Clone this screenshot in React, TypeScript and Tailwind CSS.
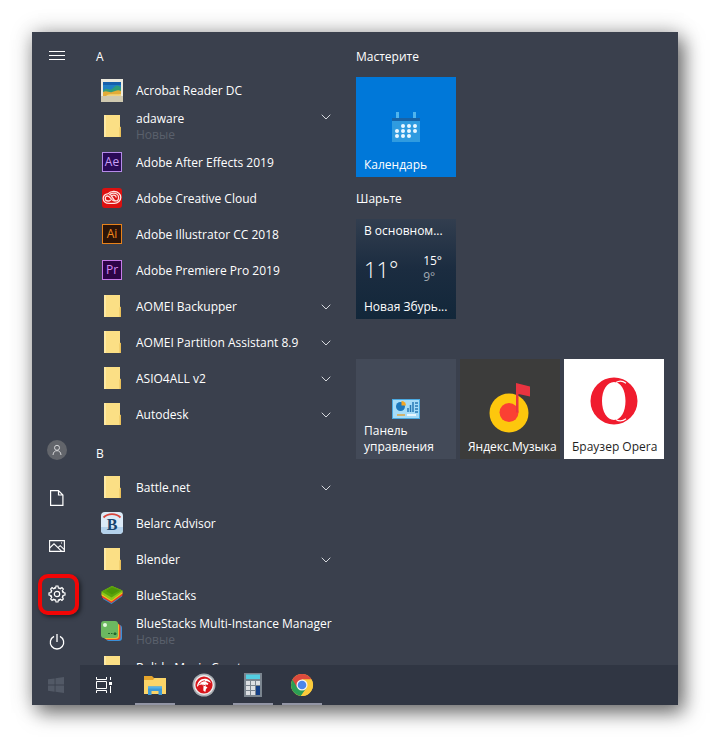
import type { ReactNode } from 'react';
import { ChevronDown } from 'lucide-react';
import clsx from 'clsx';

interface AppEntry {
  name: string;
  icon?: ReactNode;
  isNew?: boolean;
  folder?: boolean;
}

interface AppGroup {
  letter: string;
  apps: AppEntry[];
}

/* ---------- App icons ---------- */

function FolderIcon() {
  return (
    <svg viewBox="0 0 24 24" className="h-6 w-6" aria-hidden="true">
      <path d="M4 1h16v12l1 1.500v8.500H4z" fill="#fbdf85" />
      <path d="M4 1h2v22H4z" fill="#fde9a4" />
      <path d="M19.500 13.500l1.500-1v10.500h-1.500z" fill="#e9bf58" />
    </svg>
  );
}

function PictureIcon() {
  return (
    <svg viewBox="0 0 24 24" className="h-6 w-6" aria-hidden="true">
      <path d="M1 1h22v23H1z" fill="#eceade" />
      <path d="M1 18h22v6H1z" fill="#cfc9b0" />
      <path d="M3 4h18v14H3z" fill="#1f7fc4" />
      <path d="M3 4h18v3H3z" fill="#1560ac" />
      <path d="M3 13c4-5 6 0 9-2s5-6 9-1v4H3z" fill="#2f9d78" />
      <path d="M3 14c4-2 6 1 9 0s6-3 9-1v5H3z" fill="#e2ac37" />
      <path d="M6 18c3-3 8-1 15-2v2z" fill="#f1d27c" />
    </svg>
  );
}

function AfterEffectsIcon() {
  return (
    <span className="flex h-5 w-5 items-center justify-center border border-[#b58be8] bg-[#2a0a57] text-xs leading-none font-medium text-[#c9a0f5]">
      Ae
    </span>
  );
}

function IllustratorIcon() {
  return (
    <span className="flex h-5 w-5 items-center justify-center border border-[#e8821a] bg-[#2b1408] text-xs leading-none font-medium text-[#f58a1f]">
      Ai
    </span>
  );
}

function PremiereIcon() {
  return (
    <span className="flex h-5 w-5 items-center justify-center border border-[#c77be8] bg-[#2d0447] text-xs leading-none font-medium text-[#d58cf5]">
      Pr
    </span>
  );
}

function CreativeCloudIcon() {
  return (
    <svg viewBox="0 0 20 20" className="h-5 w-5" fill="none" aria-hidden="true">
      <rect width="20" height="20" rx="3" fill="#dc1010" />
      <g stroke="#ffe4e0" strokeWidth="1.300">
        <path d="M7 15.300c-3.500 0-5.800-2-5.800-4.800S3.500 6 6.200 5.600C8 3.500 10.200 3.200 12 3.300c4 .2 6.800 2.800 6.800 6s-2.800 6-6.500 6z" />
        <path d="M13.500 12.800H12c-2.500 0-4-4.800-6.500-4.800C4.300 8 3.300 9 3.300 10.400s1.200 2.600 2.900 2.600c1.300 0 1.800-.5 2.600-1.200" />
        <path d="M7.200 7.200c1-1.300 2.500-2 4.200-2 3 0 5.200 1.800 5.200 4.200 0 2-1.400 3.500-3 3.500-2.300 0-3-4.500-5-5.800" />
        <path d="M10 7.500c2-.8 4 0 4.200 2" />
      </g>
    </svg>
  );
}

function BelarcIcon() {
  return (
    <svg viewBox="0 0 24 24" className="h-6 w-6" aria-hidden="true">
      <rect x="1" y="1" width="22" height="22" rx="4" fill="#dbeaf7" />
      <path d="M1 16h22v3a4 4 0 0 1-4 4H5a4 4 0 0 1-4-4z" fill="#b4d2ec" />
      <path d="M3.500 6.500C8 2 16 2 20.500 6.500" fill="none" stroke="#d8453c" strokeWidth="1.800" />
      <text
        x="12"
        y="19"
        textAnchor="middle"
        fontSize="16"
        fontWeight="700"
        fill="#17446f"
        className="font-['Liberation_Serif',serif]"
      >
        B
      </text>
    </svg>
  );
}

function BlueStacksIcon() {
  return (
    <svg viewBox="0 0 24 24" className="h-6 w-6" aria-hidden="true">
      <path d="M3 14l8.500 5.500L22 11v2.500L11.500 21 3 16z" fill="#2e8fd6" />
      <path d="M2 12.500l9.500 5.500L22.500 9.500v3L11.500 20 2 14.500z" fill="#e83a25" />
      <path d="M1.500 10.500l10 6L22.500 8.500v2l-11 8-10-6z" fill="#f8c51c" />
      <path d="M1.500 8.500L12 3l10.500 4.500v1.500l-11 8.500-10-6.500z" fill="#8cc81a" />
      <path d="M1.500 8.500L12 3l10.500 4.500-11 7z" fill="#5ba30b" />
      <path d="M6 8L12 4.500l7.500 3-7.500 4z" fill="#4c9408" />
    </svg>
  );
}

function MultiInstanceIcon() {
  return (
    <svg viewBox="0 0 24 24" className="h-6 w-6" aria-hidden="true">
      <rect x="6" y="6" width="16" height="16" rx="3" fill="#3b8fd8" />
      <rect x="5" y="5" width="15.500" height="16" rx="3" fill="#e9492b" />
      <rect x="3.500" y="4" width="15.500" height="16" rx="3" fill="#f5bd2f" />
      <rect x="1" y="2" width="17" height="17" rx="3" fill="#6cb860" />
      <circle cx="5" cy="6" r="2" fill="#e4f7dd" />
      <path d="M8 14.500h2M11 14.500h1.500M14 14h2v1.500h-2z" stroke="#22692d" fill="#22692d" />
    </svg>
  );
}

/* ---------- Rail icons ---------- */

const stroke = {
  fill: 'none',
  stroke: 'currentColor',
  'aria-hidden': true,
} as const;

function MenuIcon() {
  return (
    <svg viewBox="0 0 16 16" className="h-4 w-4" {...stroke}>
      <path d="M0 3.500h16M0 7.500h16M0 11.500h16" />
    </svg>
  );
}

function UserIcon() {
  return (
    <svg viewBox="0 0 20 20" className="h-5 w-5" {...stroke}>
      <circle cx="10" cy="10" r="10" fill="#62656b" stroke="none" />
      <circle cx="10" cy="7.800" r="2.500" stroke="#d5d6d8" />
      <path d="M6 15c.3-3 1.800-4.300 4-4.300s3.700 1.300 4 4.300" stroke="#d5d6d8" />
    </svg>
  );
}

function DocumentIcon() {
  return (
    <svg viewBox="0 0 16 16" className="h-4 w-4" {...stroke} strokeWidth="1.200">
      <path d="M1.600.6h7.900l4.400 4.400v10.400H1.600zM9.500.6V5h4.400" />
    </svg>
  );
}

function PhotosIcon() {
  return (
    <svg viewBox="0 0 16 16" className="h-4 w-4" {...stroke} strokeWidth="1.100">
      <path d="M.6 2.600h14.800v10.800H.6z" />
      <path d="M.6 10L5 5.800l7.500 7.400M9 9.700l2.200-2 4.200 4" />
      <path d="M12 5h1" />
    </svg>
  );
}

function SettingsIcon() {
  const teeth = [0, 45, 90, 135, 180, 225, 270, 315];
  return (
    <svg viewBox="0 0 18 18" className="h-[18px] w-[18px]" {...stroke} strokeWidth="1.200">
      <circle cx="9" cy="9" r="2.700" />
      {teeth.map((angle) => (
        <path
          key={angle}
          d="M6.600 3.200L7.600 3l.4-2h2l.4 2 1 .4 1-.8"
          transform={`rotate(${angle} 9 9)`}
        />
      ))}
    </svg>
  );
}

function PowerIcon() {
  return (
    <svg viewBox="0 0 16 16" className="h-4 w-4" {...stroke} strokeWidth="1.300">
      <path d="M8 0v8M5 2.300a6.700 6.700 0 1 0 6 0" />
    </svg>
  );
}

/* ---------- Taskbar icons ---------- */

function WindowsIcon() {
  return (
    <svg viewBox="0 0 16 16" className="h-4 w-4" fill="#525966" aria-hidden="true">
      <path d="M0 2.300L6.600 1.400v6.200H0zM7.500 1.300L16 0v7.600H7.500zM0 8.500h6.600v6.200L0 13.800zM7.500 8.500H16V16l-8.500-1.200z" />
    </svg>
  );
}

function TaskViewIcon() {
  return (
    <svg viewBox="0 0 18 16" className="h-4 w-[18px]" {...stroke}>
      <path d="M1.500 0v2.500h10V0M1.500 4.500h10v7h-10zM1.500 16v-2.500h10V16M15.500 0v3M15.500 9v7" />
      <path d="M14 5h3v3h-3z" fill="currentColor" stroke="none" />
    </svg>
  );
}

function ExplorerIcon() {
  return (
    <svg viewBox="0 0 24 24" className="h-6 w-6" aria-hidden="true">
      <path d="M1 3h8l2 2h12v16H1z" fill="#e5a52c" />
      <path d="M1 7h9l1.500-2H23v16H1z" fill="#fbd568" />
      <path d="M5 13.500h14V22h-3.500v-4h-7v4H5z" fill="#3d9ad6" />
      <path d="M5 13.500h14v2H5z" fill="#55b2e8" />
    </svg>
  );
}

function SpartanIcon() {
  return (
    <svg viewBox="0 0 24 24" className="h-6 w-6" aria-hidden="true">
      <circle cx="12" cy="12" r="11.500" fill="#a9aeb3" />
      <circle cx="12" cy="12" r="10" fill="#eceeef" />
      <circle cx="12" cy="12" r="8.600" fill="#d8161c" />
      <path
        d="M5 14c0-6 5-9.500 10-8 2 .7 3.500 2 4 4-2-1.600-4-2.200-6-1.700l3.500 2.200-1 1.500-2-.7.5 2.200 1.500 1-1.500 1.500-.7 3-2-1.500.2-4.500-1.800-1.500c-2 0-3.500.8-4.700 2.500z"
        fill="#fff"
      />
      <path d="M7 11.500c1.500-2.500 3.500-3.500 6-3.700M10.500 12l3 .8" fill="none" stroke="#d8161c" strokeWidth=".9" />
    </svg>
  );
}

function CalculatorIcon() {
  return (
    <svg viewBox="0 0 24 24" className="h-6 w-6" aria-hidden="true">
      <path d="M3 0h18v24H3z" fill="#7b858f" />
      <path d="M5 1.500h14V6H5z" fill="#53cfe2" />
      <path d="M5 8h4v4H5zM10 8h4v4h-4zM15 8h4v4h-4zM5 13h4v4H5zM10 13h4v4h-4zM5 18h4v4H5zM10 18h4v4h-4z" fill="#dcdfe3" />
      <path d="M15 13h4v9h-4z" fill="#143f86" />
    </svg>
  );
}

function ChromeIcon() {
  return (
    <svg viewBox="0 0 24 24" className="h-6 w-6" aria-hidden="true">
      <circle cx="12" cy="12" r="11" fill="#fbcb3c" />
      <path d="M12 12L2.500 6.500a11 11 0 0 0 8.400 16.450L16.760 14.750z" fill="#2b9e55" />
      <path d="M12 6.500h9.530A11 11 0 0 0 2.470 6.500l4.770 8.250z" fill="#dc4a3d" />
      <path d="M21.530 6.500H12l4.760 8.250-5.860 8.200A11 11 0 0 0 21.530 6.500z" fill="#fbcb3c" />
      <circle cx="12" cy="12" r="5.500" fill="#f4f4f4" />
      <circle cx="12" cy="12" r="4.300" fill="#4a86ea" />
    </svg>
  );
}

/* ---------- Tile icons ---------- */

function CalendarIcon() {
  const dots = [
    [14, 15], [20, 15], [26, 15],
    [8, 20], [14, 20], [20, 20], [26, 20],
    [8, 25], [14, 25], [20, 25],
  ];
  return (
    <svg viewBox="0 0 34 34" className="h-[34px] w-[34px]" aria-hidden="true">
      <path d="M7 1h3v6H7zM24 1h3v6h-3z" fill="#4fb4ee" />
      <path d="M3 9h28v22H3z" fill="#2f9be0" />
      <path d="M3 7h28v3H3z" fill="#1763a8" />
      {dots.map(([x, y]) => (
        <circle key={`${x}-${y}`} cx={x} cy={y} r="2" fill="#eaf7ff" />
      ))}
    </svg>
  );
}

function ControlPanelIcon() {
  return (
    <svg viewBox="0 0 28 20" className="h-5 w-7" aria-hidden="true">
      <path d="M0 0h28v20H0z" fill="#4aa9e0" />
      <path d="M1 1h26v18H1z" fill="#a5dcf8" />
      <circle cx="8.500" cy="7.500" r="4.500" fill="#1d78bd" />
      <path d="M9.500 6.500V2a4.500 4.500 0 0 1 4.500 4.500z" fill="#f5a623" />
      <path d="M16 13V9M18.500 13V6M21 13V3" stroke="#2779b5" strokeWidth="1.500" />
      <path d="M23 4h3M23 7h3M23 10h3M23 13h3" stroke="#2779b5" strokeWidth="1.300" />
      <path d="M5 16h8" stroke="#e0a640" strokeWidth="1.500" />
      <path d="M15 16h9" stroke="#fff" strokeWidth="1.500" />
    </svg>
  );
}

function MusicIcon() {
  return (
    <svg viewBox="0 0 42 50" className="h-[50px] w-[42px]" aria-hidden="true">
      <circle cx="20" cy="30" r="19.500" fill="#fdc70d" />
      <circle cx="20" cy="29.500" r="9.500" fill="#fb4033" />
      <path d="M27 0l14 3.500v10L29.500 11v18.500H27z" fill="#e93440" />
    </svg>
  );
}

function OperaIcon() {
  return (
    <svg viewBox="0 0 48 48" className="h-12 w-12" aria-hidden="true">
      <path
        fillRule="evenodd"
        d="M24 .5a23.500 23.500 0 1 0 0 47 23.500 23.500 0 0 0 0-47zM24 5c7 0 11.500 8.500 11.500 19S31 43 24 43s-12-8.500-12-19S17 5 24 5z"
        fill="#f01c2e"
      />
      <path d="M26 5.500c3-2 7-1.500 10 .8" fill="none" stroke="#fff" strokeWidth="1.200" />
      <path d="M26 42.500c3 2 7 1.500 10-.8" fill="none" stroke="#fff" strokeWidth="1.200" />
    </svg>
  );
}

/* ---------- Data ---------- */

const APP_GROUPS: AppGroup[] = [
  {
    letter: 'A',
    apps: [
      { name: 'Acrobat Reader DC', icon: <PictureIcon /> },
      { name: 'adaware', folder: true, isNew: true },
      { name: 'Adobe After Effects 2019', icon: <AfterEffectsIcon /> },
      { name: 'Adobe Creative Cloud', icon: <CreativeCloudIcon /> },
      { name: 'Adobe Illustrator CC 2018', icon: <IllustratorIcon /> },
      { name: 'Adobe Premiere Pro 2019', icon: <PremiereIcon /> },
      { name: 'AOMEI Backupper', folder: true },
      { name: 'AOMEI Partition Assistant 8.9', folder: true },
      { name: 'ASIO4ALL v2', folder: true },
      { name: 'Autodesk', folder: true },
    ],
  },
  {
    letter: 'B',
    apps: [
      { name: 'Battle.net', folder: true },
      { name: 'Belarc Advisor', icon: <BelarcIcon /> },
      { name: 'Blender', folder: true },
      { name: 'BlueStacks', icon: <BlueStacksIcon /> },
      { name: 'BlueStacks Multi-Instance Manager', icon: <MultiInstanceIcon />, isNew: true },
      { name: 'Bolide Movie Creator', folder: true },
    ],
  },
];

const RAIL_ITEMS = [
  { label: 'Пользователь', icon: <UserIcon /> },
  { label: 'Документы', icon: <DocumentIcon /> },
  { label: 'Изображения', icon: <PhotosIcon /> },
  { label: 'Параметры', icon: <SettingsIcon />, highlighted: true },
  { label: 'Выключение', icon: <PowerIcon /> },
];

const TASKBAR_ITEMS = [
  { label: 'Проводник', icon: <ExplorerIcon />, running: true },
  { label: 'Антивирус', icon: <SpartanIcon />, running: false },
  { label: 'Калькулятор', icon: <CalculatorIcon />, running: true },
  { label: 'Google Chrome', icon: <ChromeIcon />, running: true },
];

/* ---------- Sections ---------- */

function Rail() {
  return (
    <nav className="flex w-12 shrink-0 flex-col justify-between pl-px">
      <button type="button" aria-label="Меню" className="flex h-12 items-center justify-center">
        <MenuIcon />
      </button>
      <div className="flex flex-col">
        {RAIL_ITEMS.map((item) => (
          <button
            key={item.label}
            type="button"
            aria-label={item.label}
            className="relative flex h-12 items-center justify-center pt-0.5"
          >
            {item.icon}
            {item.highlighted && (
              <span className="absolute top-[5px] right-px bottom-[2px] left-[5px] rounded-[10px] border-4 border-[#f20505] shadow-[2px_2px_4px_rgba(0,0,0,0.5)]" />
            )}
          </button>
        ))}
      </div>
    </nav>
  );
}

function AppRow({ app }: { app: AppEntry }) {
  return (
    <li>
      <button type="button" className="flex h-9 w-full items-center gap-2 text-left">
        <span className="flex w-8 shrink-0 items-center justify-center pb-0.5">
          {app.icon ?? <FolderIcon />}
        </span>
        <span className="flex min-w-0 flex-1 flex-col">
          <span className="whitespace-nowrap">{app.name}</span>
          {app.isNew && <span className="text-[#5a606c]">Новые</span>}
        </span>
        {app.folder && (
          <ChevronDown
            size={16}
            strokeWidth={1.5}
            className={clsx('shrink-0 text-[#d5d8dc]', app.isNew && 'self-start')}
          />
        )}
      </button>
    </li>
  );
}

function AppList() {
  return (
    <div className="w-[264px] shrink-0 overflow-hidden pt-1 pr-2.5 pl-4">
      {APP_GROUPS.map((group) => (
        <section key={group.letter}>
          <h2 className="flex h-[37px] items-center pt-1">{group.letter}</h2>
          <ul>
            {group.apps.map((app) => (
              <AppRow key={app.name} app={app} />
            ))}
          </ul>
        </section>
      ))}
    </div>
  );
}

function Tiles() {
  return (
    <div className="min-w-0 flex-1 overflow-hidden pt-[17px] pl-3">
      <section>
        <h2 className="mb-3">Мастерите</h2>
        <button
          type="button"
          className="flex h-[100px] w-[100px] flex-col justify-end bg-[#0078d9] px-2 pb-1 text-left"
        >
          <span className="mb-3 flex justify-center">
            <CalendarIcon />
          </span>
          Календарь
        </button>
      </section>

      <section className="mt-3.5">
        <h2 className="mb-3">Шарьте</h2>
        <button
          type="button"
          className="flex h-[100px] w-[100px] flex-col justify-between bg-linear-to-b from-[#323e4f] via-[#1b2c40] to-[#12273a] px-2 py-1 text-left"
        >
          <span>В основном...</span>
          <span className="flex w-full items-center justify-between pr-1.5">
            <span className="text-[22px] leading-7 font-light">11°</span>
            <span className="flex flex-col">
              <span>15°</span>
              <span className="text-[#a3abb5]">9°</span>
            </span>
          </span>
          <span>Новая Збурь...</span>
        </button>
      </section>

      <section className="mt-10 flex gap-1">
        <button
          type="button"
          className="flex h-[100px] w-[100px] shrink-0 flex-col justify-end bg-[#434a58] px-2 pb-1 text-left"
        >
          <span className="mb-1 flex justify-center">
            <ControlPanelIcon />
          </span>
          Панель управления
        </button>
        <button
          type="button"
          className="flex h-[100px] w-[100px] shrink-0 flex-col justify-end bg-[#3c3c3b] px-2 pb-1 text-left whitespace-nowrap"
        >
          <span className="mb-1.5 flex justify-center">
            <MusicIcon />
          </span>
          Яндекс.Музыка
        </button>
        <button
          type="button"
          className="flex h-[100px] w-[100px] shrink-0 flex-col justify-end bg-white px-2 pb-1 text-left whitespace-nowrap text-[#1f1f1f]"
        >
          <span className="mb-3.5 flex justify-center">
            <OperaIcon />
          </span>
          Браузер Opera
        </button>
      </section>
    </div>
  );
}

function Taskbar() {
  return (
    <footer className="flex h-10 shrink-0 bg-[#303643]">
      <button type="button" aria-label="Пуск" className="flex w-12 items-center justify-center bg-[#3a404d]">
        <WindowsIcon />
      </button>
      <button type="button" aria-label="Представление задач" className="flex w-12 items-center justify-center">
        <TaskViewIcon />
      </button>
      <div className="flex gap-px pl-[3px]">
        {TASKBAR_ITEMS.map((item) => (
          <button
            key={item.label}
            type="button"
            aria-label={item.label}
            className="relative flex w-12 items-center justify-center"
          >
            {item.icon}
            {item.running && <span className="absolute inset-x-1 bottom-0 h-0.5 bg-[#9295a5]" />}
          </button>
        ))}
      </div>
    </footer>
  );
}

export default function App() {
  return (
    <main className="h-screen bg-white p-8 font-['Open_Sans','Noto_Sans',sans-serif] text-xs text-white">
      <div className="flex h-full flex-col bg-[#3a404d] shadow-[0_0_20px_rgba(0,0,0,0.25),6px_8px_18px_rgba(0,0,0,0.5)]">
        <div className="flex min-h-0 flex-1">
          <Rail />
          <AppList />
          <Tiles />
        </div>
        <Taskbar />
      </div>
    </main>
  );
}
